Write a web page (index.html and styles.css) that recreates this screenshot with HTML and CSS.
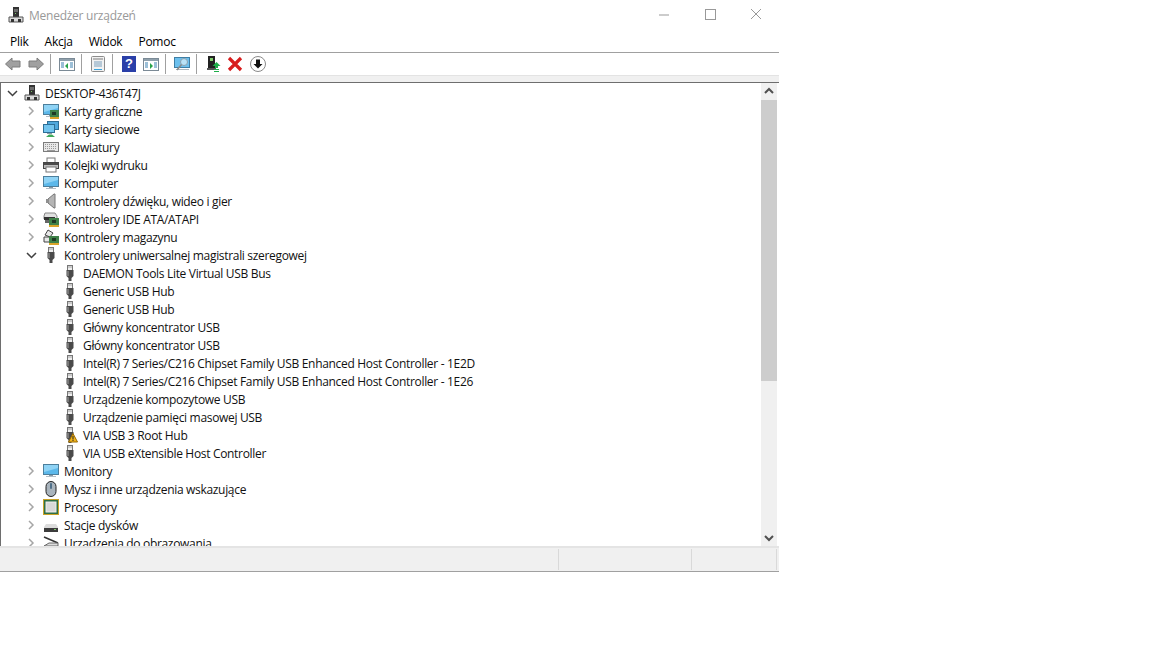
FILE: index.html
```html
<!DOCTYPE html>
<html lang="pl">
<head>
<meta charset="utf-8">
<title>Menedżer urządzeń</title>
<link rel="stylesheet" href="styles.css">
</head>
<body>
<svg class="defs" width="0" height="0" aria-hidden="true">
  <defs>
    <symbol id="pc" viewBox="0 0 16 16">
      <rect x="5" y="0" width="6" height="10" fill="#333"/>
      <rect x="6" y="2" width="4" height="3" fill="#6d6d6d"/>
      <rect x="7" y="6" width="1" height="1" fill="#7ec36a"/>
      <path d="M1 10h14v5H1z" fill="#dadada" stroke="#555" stroke-width="1"/>
      <rect x="3" y="12" width="3" height="3" fill="#333"/>
      <rect x="10" y="12" width="3" height="3" fill="#333"/>
    </symbol>
    <symbol id="screen" viewBox="0 0 16 16">
      <rect x="0.5" y="1.5" width="15" height="10" fill="#5cb8ea" stroke="#4d7f9c"/>
      <path d="M1 2h14v3L1 9z" fill="#8fd3f5"/>
      <rect x="6" y="12" width="4" height="1" fill="#8a9aa5"/>
      <rect x="3" y="13" width="10" height="1" fill="#b4bec5"/>
    </symbol>
    <symbol id="gpu" viewBox="0 0 16 16">
      <use href="#screen"/>
      <rect x="7" y="7" width="9" height="8" fill="#3f8148"/>
      <rect x="9" y="9" width="4" height="3" fill="#1f3a24"/>
      <rect x="7" y="14" width="9" height="2" fill="#d9a429"/>
    </symbol>
    <symbol id="net" viewBox="0 0 16 16">
      <rect x="4.5" y="0.5" width="11" height="8" fill="#4fa8dc" stroke="#2e6f96"/>
      <rect x="0.5" y="3.5" width="11" height="8" fill="#72c4ee" stroke="#2e6f96"/>
      <rect x="4" y="12" width="5" height="1" fill="#8a9aa5"/>
      <path d="M3 16l3-2.5h3l3 2.5z" fill="#3fa85a"/>
    </symbol>
    <symbol id="keyboard" viewBox="0 0 16 16">
      <rect x="0.5" y="3.5" width="15" height="9" fill="#e8e8e8" stroke="#7d7d7d"/>
      <path d="M2 5.5h12M2 7.5h12M2 9.5h12" stroke="#9a9a9a" stroke-dasharray="1 1"/>
      <rect x="4" y="11" width="8" height="1" fill="#9a9a9a"/>
    </symbol>
    <symbol id="printer" viewBox="0 0 16 16">
      <rect x="4" y="1" width="8" height="5" fill="#fff" stroke="#777"/>
      <rect x="0.5" y="5.5" width="15" height="6" fill="#bdbdbd" stroke="#444"/>
      <rect x="1" y="6" width="14" height="2" fill="#4b4b4b"/>
      <rect x="3" y="10" width="10" height="5" fill="#fff" stroke="#777"/>
    </symbol>
    <symbol id="speaker" viewBox="0 0 16 16">
      <path d="M5 6l6-5h1v14h-1L5 10z" fill="#b5b5b5" stroke="#777"/>
      <rect x="3" y="6" width="3" height="4" fill="#8f8f8f"/>
    </symbol>
    <symbol id="ide" viewBox="0 0 16 16">
      <path d="M2 2h10l2 3v3H1V5z" fill="#e0e0e0" stroke="#888"/>
      <rect x="1" y="6" width="11" height="3" fill="#333"/>
      <rect x="6" y="7" width="10" height="7" fill="#3f8148"/>
      <rect x="9" y="9" width="4" height="3" fill="#1f3a24"/>
      <rect x="6" y="14" width="10" height="2" fill="#d9a429"/>
      <rect x="2" y="9" width="4" height="3" fill="#666"/>
    </symbol>
    <symbol id="storage" viewBox="0 0 16 16">
      <path d="M5 1l5 3-3 4-5-2z" fill="#e8e8e8" stroke="#444"/>
      <path d="M1 8h6v5H1z" fill="#e8e8e8" stroke="#444"/>
      <rect x="6" y="7" width="10" height="7" fill="#3f8148"/>
      <rect x="9" y="9" width="4" height="3" fill="#1f3a24"/>
      <rect x="6" y="14" width="10" height="2" fill="#d9a429"/>
    </symbol>
    <symbol id="usb" viewBox="0 0 16 16">
      <rect x="5.5" y="0.5" width="5" height="5" fill="#eee" stroke="#777"/>
      <rect x="6.5" y="1.5" width="1" height="1" fill="#666"/>
      <rect x="8.5" y="1.5" width="1" height="1" fill="#666"/>
      <path d="M4.5 5h7v6l-2 2v3h-3v-3l-2-2z" fill="#4a4a4a"/>
      <rect x="5" y="6" width="2" height="5" fill="#777"/>
    </symbol>
    <symbol id="warn" viewBox="0 0 16 16">
      <path d="M6.5 15L11 6.500 15.500 15z" fill="#f2b51d" stroke="#9a6a00"/>
      <rect x="10.500" y="9" width="1" height="3.500" fill="#222"/>
      <rect x="10.500" y="13" width="1" height="1" fill="#222"/>
    </symbol>
    <symbol id="mouse" viewBox="0 0 16 16">
      <rect x="3" y="0.500" width="10" height="15" rx="5" fill="#a9b4bd" stroke="#222"/>
      <rect x="7" y="2" width="2" height="6" rx="1" fill="#4f6f89"/>
    </symbol>
    <symbol id="cpu" viewBox="0 0 16 16">
      <rect x="0" y="0" width="16" height="16" fill="#c9a227"/>
      <rect x="1" y="1" width="14" height="14" fill="#2f6f45"/>
      <rect x="3" y="3" width="10" height="10" fill="#d8d8d8" stroke="#eee"/>
    </symbol>
    <symbol id="disk" viewBox="0 0 16 16">
      <path d="M3 7h10l2 3v4H1v-4z" fill="#dcdcdc"/>
      <rect x="1" y="11" width="14" height="4" fill="#3c3c3c"/>
      <rect x="11" y="12" width="2" height="1" fill="#7ec36a"/>
    </symbol>
    <symbol id="imaging" viewBox="0 0 16 16">
      <path d="M1 2l14 6" stroke="#333" stroke-width="1.500"/>
      <path d="M1 11l5-3h9v3z" fill="#ddd" stroke="#666"/>
    </symbol>
  </defs>
</svg>

<div class="window">
  <header class="titlebar">
    <svg class="ico app-ico"><use href="#pc"/></svg>
    <span class="title">Menedżer urządzeń</span>
    <div class="caption">
      <svg class="cap-btn" viewBox="0 0 46 30"><path d="M18 15h10" stroke="#999" fill="none"/></svg>
      <svg class="cap-btn" viewBox="0 0 46 30"><rect x="18.500" y="9.500" width="10" height="10" stroke="#999" fill="none"/></svg>
      <svg class="cap-btn" viewBox="0 0 46 30"><path d="M18 9l10 10M28 9L18 19" stroke="#999" fill="none"/></svg>
    </div>
  </header>

  <nav class="menubar">
    <span class="menu">Plik</span>
    <span class="menu">Akcja</span>
    <span class="menu">Widok</span>
    <span class="menu">Pomoc</span>
  </nav>

  <div class="toolbar">
    <svg class="tool wide" viewBox="0 0 16 16"><path d="M0.500 8L7 2v3h8v6H7v3z" fill="#a0a0a0" stroke="#7c7c7c"/></svg>
    <svg class="tool" viewBox="0 0 16 16"><path d="M15.500 8L9 2v3H1v6h8v3z" fill="#a0a0a0" stroke="#7c7c7c"/></svg>
    <i class="sep"></i>
    <svg class="tool" viewBox="0 0 16 16"><rect x="0.500" y="2.500" width="15" height="12" fill="#fff" stroke="#7b8a96"/><rect x="1" y="3" width="14" height="2" fill="#8fa0ac"/><path d="M2 7h3M2 9h3M2 11h3M11 7h3M11 9h3M11 11h3" stroke="#3a80b0"/><path d="M9 7v6L6 10z" fill="#2aa34a"/></svg>
    <i class="sep"></i>
    <svg class="tool" viewBox="0 0 16 16"><rect x="1.500" y="0.500" width="13" height="15" rx="1" fill="#f2f2f2" stroke="#8c8c8c"/><rect x="3" y="2" width="10" height="2" fill="#b7b7b7"/><path d="M4 6h8M4 8h8M4 10h8" stroke="#7a9fbc"/><rect x="4" y="13" width="8" height="1" fill="#3aa3dc"/></svg>
    <i class="sep"></i>
    <span class="tool wide help">?</span>
    <svg class="tool" viewBox="0 0 16 16"><rect x="0.500" y="2.500" width="15" height="12" fill="#fff" stroke="#7b8a96"/><rect x="1" y="3" width="14" height="2" fill="#8fa0ac"/><path d="M2 7h3M2 9h3M2 11h3M11 7h3M11 9h3M11 11h3" stroke="#3a80b0"/><path d="M7 7v6l3-3z" fill="#2aa34a"/></svg>
    <i class="sep"></i>
    <svg class="tool" viewBox="0 0 16 16"><rect x="0.500" y="1.500" width="15" height="10" fill="#6cc0ee" stroke="#3f7fa5"/><rect x="2" y="13" width="13" height="1" fill="#aeb8bf"/><circle cx="10" cy="6" r="3.500" fill="#b9e2f7" stroke="#8ca0ad"/><path d="M7.500 8.500L3 14" stroke="#8a8a8a" stroke-width="1.500"/></svg>
    <i class="sep"></i>
    <svg class="tool" viewBox="0 0 16 16"><rect x="3" y="0" width="7" height="12" fill="#222"/><rect x="5" y="2" width="3" height="3" fill="#7ecb6a"/><rect x="2" y="12" width="9" height="2" fill="#555"/><path d="M11.500 6l4 4h-2.500v2h-3v-2H7.500z" fill="#1fae4a"/><rect x="9" y="13" width="5" height="1" fill="#1fae4a"/><rect x="9" y="15" width="5" height="1" fill="#1fae4a"/></svg>
    <svg class="tool gap-x" viewBox="0 0 16 16"><path d="M2 2l12 12M14 2L2 14" stroke="#d81e1e" stroke-width="3.200"/></svg>
    <svg class="tool gap-x" viewBox="0 0 16 16"><circle cx="8" cy="8" r="7.500" fill="#fff" stroke="#8a8a8a"/><path d="M6 3.500h4V8h2.500L8 12.500 3.500 8H6z" fill="#111"/></svg>
  </div>

  <div class="band"></div>

  <main class="content">
    <div class="tree">
      <div class="row"><svg class="chev" viewBox="0 0 16 16"><path d="M4 6l4.500 4.500L13 6" class="open"/></svg><svg class="ico"><use href="#pc"/></svg><span class="label">DESKTOP-436T47J</span></div>
      <div class="row lvl1"><svg class="chev" viewBox="0 0 16 16"><path d="M6 4l4 4-4 4" class="closed"/></svg><svg class="ico"><use href="#gpu"/></svg><span class="label">Karty graficzne</span></div>
      <div class="row lvl1"><svg class="chev" viewBox="0 0 16 16"><path d="M6 4l4 4-4 4" class="closed"/></svg><svg class="ico"><use href="#net"/></svg><span class="label">Karty sieciowe</span></div>
      <div class="row lvl1"><svg class="chev" viewBox="0 0 16 16"><path d="M6 4l4 4-4 4" class="closed"/></svg><svg class="ico"><use href="#keyboard"/></svg><span class="label">Klawiatury</span></div>
      <div class="row lvl1"><svg class="chev" viewBox="0 0 16 16"><path d="M6 4l4 4-4 4" class="closed"/></svg><svg class="ico"><use href="#printer"/></svg><span class="label">Kolejki wydruku</span></div>
      <div class="row lvl1"><svg class="chev" viewBox="0 0 16 16"><path d="M6 4l4 4-4 4" class="closed"/></svg><svg class="ico"><use href="#screen"/></svg><span class="label">Komputer</span></div>
      <div class="row lvl1"><svg class="chev" viewBox="0 0 16 16"><path d="M6 4l4 4-4 4" class="closed"/></svg><svg class="ico"><use href="#speaker"/></svg><span class="label">Kontrolery dźwięku, wideo i gier</span></div>
      <div class="row lvl1"><svg class="chev" viewBox="0 0 16 16"><path d="M6 4l4 4-4 4" class="closed"/></svg><svg class="ico"><use href="#ide"/></svg><span class="label">Kontrolery IDE ATA/ATAPI</span></div>
      <div class="row lvl1"><svg class="chev" viewBox="0 0 16 16"><path d="M6 4l4 4-4 4" class="closed"/></svg><svg class="ico"><use href="#storage"/></svg><span class="label">Kontrolery magazynu</span></div>
      <div class="row lvl1"><svg class="chev" viewBox="0 0 16 16"><path d="M4 6l4.500 4.500L13 6" class="open"/></svg><svg class="ico"><use href="#usb"/></svg><span class="label">Kontrolery uniwersalnej magistrali szeregowej</span></div>
      <div class="row lvl2"><span class="chev"></span><svg class="ico"><use href="#usb"/></svg><span class="label">DAEMON Tools Lite Virtual USB Bus</span></div>
      <div class="row lvl2"><span class="chev"></span><svg class="ico"><use href="#usb"/></svg><span class="label">Generic USB Hub</span></div>
      <div class="row lvl2"><span class="chev"></span><svg class="ico"><use href="#usb"/></svg><span class="label">Generic USB Hub</span></div>
      <div class="row lvl2"><span class="chev"></span><svg class="ico"><use href="#usb"/></svg><span class="label">Główny koncentrator USB</span></div>
      <div class="row lvl2"><span class="chev"></span><svg class="ico"><use href="#usb"/></svg><span class="label">Główny koncentrator USB</span></div>
      <div class="row lvl2"><span class="chev"></span><svg class="ico"><use href="#usb"/></svg><span class="label">Intel(R) 7 Series/C216 Chipset Family USB Enhanced Host Controller - 1E2D</span></div>
      <div class="row lvl2"><span class="chev"></span><svg class="ico"><use href="#usb"/></svg><span class="label">Intel(R) 7 Series/C216 Chipset Family USB Enhanced Host Controller - 1E26</span></div>
      <div class="row lvl2"><span class="chev"></span><svg class="ico"><use href="#usb"/></svg><span class="label">Urządzenie kompozytowe USB</span></div>
      <div class="row lvl2"><span class="chev"></span><svg class="ico"><use href="#usb"/></svg><span class="label">Urządzenie pamięci masowej USB</span></div>
      <div class="row lvl2"><span class="chev"></span><svg class="ico"><use href="#usb"/><use href="#warn"/></svg><span class="label">VIA USB 3 Root Hub</span></div>
      <div class="row lvl2"><span class="chev"></span><svg class="ico"><use href="#usb"/></svg><span class="label">VIA USB eXtensible Host Controller</span></div>
      <div class="row lvl1"><svg class="chev" viewBox="0 0 16 16"><path d="M6 4l4 4-4 4" class="closed"/></svg><svg class="ico"><use href="#screen"/></svg><span class="label">Monitory</span></div>
      <div class="row lvl1"><svg class="chev" viewBox="0 0 16 16"><path d="M6 4l4 4-4 4" class="closed"/></svg><svg class="ico"><use href="#mouse"/></svg><span class="label">Mysz i inne urządzenia wskazujące</span></div>
      <div class="row lvl1"><svg class="chev" viewBox="0 0 16 16"><path d="M6 4l4 4-4 4" class="closed"/></svg><svg class="ico"><use href="#cpu"/></svg><span class="label">Procesory</span></div>
      <div class="row lvl1"><svg class="chev" viewBox="0 0 16 16"><path d="M6 4l4 4-4 4" class="closed"/></svg><svg class="ico"><use href="#disk"/></svg><span class="label">Stacje dysków</span></div>
      <div class="row lvl1"><svg class="chev" viewBox="0 0 16 16"><path d="M6 4l4 4-4 4" class="closed"/></svg><svg class="ico"><use href="#imaging"/></svg><span class="label">Urządzenia do obrazowania</span></div>
    </div>
    <div class="scrollbar">
      <svg class="arrow" viewBox="0 0 16 17"><path d="M4 10l4-4 4 4" fill="none" stroke="#505050" stroke-width="2"/></svg>
      <div class="thumb"></div>
      <svg class="arrow" viewBox="0 0 16 17"><path d="M4 7l4 4 4-4" fill="none" stroke="#505050" stroke-width="2"/></svg>
    </div>
  </main>

  <footer class="statusbar">
    <div class="cell cell-main"></div>
    <div class="cell cell-mid"></div>
    <div class="cell cell-end"></div>
  </footer>
</div>
</body>
</html>
```

FILE: styles.css
```css
* { box-sizing: border-box; }
html, body { margin: 0; padding: 0; background: #fff; }
body {
  width: 1152px;
  height: 648px;
  overflow: hidden;
  font-family: "Open Sans", "Noto Sans", "Liberation Sans", sans-serif;
  font-size: 12px;
  color: #000;
}
.defs { position: absolute; }
.window { width: 779px; height: 571px; display: flex; flex-direction: column; }

.titlebar { height: 30px; display: flex; align-items: center; padding-left: 8px; flex: none; }
.app-ico { flex: none; margin-right: 5px; }
.title { color: #999; letter-spacing: -0.25px; }
.caption { margin-left: auto; display: flex; }
.cap-btn { width: 46px; height: 30px; display: block; }

.menubar { height: 23px; flex: none; display: flex; padding-left: 3px; align-items: center; border-bottom: 1px solid #a0a0a0; }
.menu { padding: 0 7px; letter-spacing: -0.25px; }
.menu + .menu { margin-left: 2px; }

.toolbar { height: 22px; flex: none; display: flex; align-items: center; padding-left: 5px; background: #fff; }
.tool { width: 16px; height: 16px; flex: none; margin-right: 6px; display: block; }
.tool.wide { margin-right: 7px; }
.tool.gap-x { margin-right: 7px; }
.sep { width: 1px; height: 20px; background: #a0a0a0; margin-right: 8px; flex: none; }
.help {
  width: 14px;
  height: 16px;
  margin-left: 1px;
  background: #2a3fa8;
  color: #fff;
  font: bold 13px/16px "Liberation Sans", sans-serif;
  text-align: center;
}

.band { height: 7px; flex: none; background: #f0f0f0; border-top: 1px solid #e3e3e3; }

.content {
  height: 464px;
  flex: none;
  display: flex;
  overflow: hidden;
  border-top: 1px solid #6e6e6e;
  border-left: 1px solid #6e6e6e;
  padding-right: 2px;
}
.tree { flex: 1; padding-top: 1px; overflow: hidden; min-width: 0; }
.row { height: 18px; display: flex; align-items: center; padding-left: 3px; white-space: nowrap; }
.lvl1 { padding-left: 22px; }
.lvl2 { padding-left: 41px; }
.chev { width: 16px; height: 16px; flex: none; margin-right: 4px; display: block; }
.chev path { fill: none; stroke-width: 1.500; }
.chev .closed { stroke: #a6a6a6; }
.chev .open { stroke: #404040; }
.ico { width: 16px; height: 16px; flex: none; display: block; }
.label { margin-left: 5px; letter-spacing: -0.32px; color: #111; }

.scrollbar { width: 16px; flex: none; display: flex; flex-direction: column; background: #f0f0f0; }
.arrow { width: 16px; height: 17px; display: block; flex: none; }
.thumb { height: 281px; background: #cdcdcd; flex: none; }
.arrow:last-child { margin-top: auto; }

.statusbar {
  height: 26px;
  flex: none;
  display: flex;
  background: #f0f0f0;
  border-top: 2px solid #e4e4e4;
  border-bottom: 1px solid #a0a0a0;
  padding: 1px 0;
}
.cell { border-right: 1px solid #d9d9d9; height: 100%; }
.cell-main { width: 559px; }
.cell-mid { width: 133px; }
.cell-end { width: 85px; }
```
